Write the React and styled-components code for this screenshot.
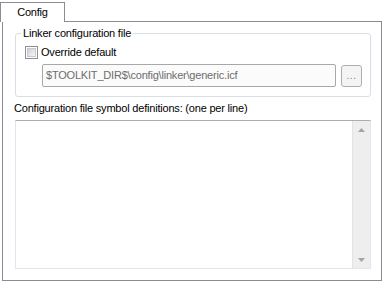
import React from "react";
import styled, { createGlobalStyle } from "styled-components";

const Global = createGlobalStyle`
  html, body { margin: 0; padding: 0; background: #ffffff; }
  body { font-family: "Liberation Sans", Arial, sans-serif; font-size: 11px; letter-spacing: -0.2px; color: #000; }
`;

const Window = styled.div`
  width: 383px;
  height: 282px;
  padding-top: 2px;
  box-sizing: border-box;
  display: flex;
  flex-direction: column;
`;

const TabStrip = styled.div`
  display: flex;
  height: 19px;
`;

const Tab = styled.div`
  width: 65px;
  height: 20px;
  box-sizing: border-box;
  border: 1px solid #898c95;
  border-bottom: none;
  background: #fff;
  position: relative;
  z-index: 1;
  display: flex;
  align-items: center;
  justify-content: center;
  padding-bottom: 1px;
  font-size: 11px;
  line-height: 13px;
`;

const Panel = styled.div`
  margin-left: 2px;
  width: 380px;
  height: 260px;
  box-sizing: border-box;
  border: 1px solid #898c95;
  background: #fff;
  padding: 5px 10px 0 11px;
  display: flex;
  flex-direction: column;
`;

const Group = styled.fieldset`
  margin: 0 0 0 1px;
  padding: 6px 8px 9px 9px;
  border: 1px solid #d5dfe5;
  border-radius: 3px;
  min-inline-size: 0;
`;

const Legend = styled.legend`
  padding: 0 2px;
  margin-left: -4px;
  line-height: 13px;
  font-size: 11px;
`;

const CheckRow = styled.label`
  display: flex;
  align-items: center;
  height: 13px;
  gap: 3px;
  margin-bottom: 5px;
  line-height: 13px;
`;

const CheckBox = styled.span`
  width: 13px;
  height: 13px;
  box-sizing: border-box;
  border: 1px solid #8e8f8f;
  background: #fff;
  padding: 1px;
  display: flex;
  & > span {
    flex: 1;
    border: 1px solid #c7c9cc;
    background: linear-gradient(135deg, #cbcfd5 0%, #e6e8eb 60%, #f6f6f6 100%);
  }
`;

const PathRow = styled.div`
  display: flex;
  align-items: center;
  gap: 5px;
  margin-left: 17px;
`;

const PathInput = styled.div`
  flex: 1;
  height: 23px;
  box-sizing: border-box;
  border: 1px solid #a8a8a8;
  border-radius: 2px;
  background: #fbfbfb;
  color: #6d6d6d;
  display: flex;
  align-items: center;
  padding-left: 3px;
  line-height: 13px;
  white-space: nowrap;
`;

const BrowseButton = styled.div`
  width: 21px;
  height: 22px;
  margin-top: 1px;
  box-sizing: border-box;
  border: 1px solid #adadad;
  border-radius: 3px;
  background: #f4f4f4;
  color: #838383;
  display: flex;
  align-items: center;
  justify-content: center;
  font-size: 10px;
  letter-spacing: 0.5px;
  padding-bottom: 1px;
`;

const FieldLabel = styled.div`
  margin-top: 5px;
  line-height: 13px;
  height: 13px;
`;

const TextBox = styled.div`
  margin: 5px 0 0 1px;
  height: 149px;
  box-sizing: border-box;
  border: 1px solid #e2e6eb;
  border-top-color: #abadb3;
  background: #fff;
  display: flex;
`;

const TextArea = styled.div`
  flex: 1;
`;

const ScrollBar = styled.div`
  width: 17px;
  background: #eeeeee;
  border-left: 1px solid #e3e3e3;
  display: flex;
  flex-direction: column;
  justify-content: space-between;
  align-items: center;
`;

const Arrow = styled.div`
  height: 17px;
  display: flex;
  align-items: center;
  justify-content: center;
  width: 100%;
`;

function Triangle({ down }) {
  return (
    <svg width="7" height="4" viewBox="0 0 7 4">
      {down ? (
        <polygon points="0,0 7,0 3.5,4" fill="#a3a3a3" />
      ) : (
        <polygon points="0,4 7,4 3.5,0" fill="#a3a3a3" />
      )}
    </svg>
  );
}

export default function App() {
  return (
    <>
      <Global />
      <Window>
        <TabStrip>
          <Tab>Config</Tab>
        </TabStrip>
        <Panel>
          <Group>
            <Legend>Linker configuration file</Legend>
            <CheckRow>
              <CheckBox>
                <span />
              </CheckBox>
              Override default
            </CheckRow>
            <PathRow>
              <PathInput>$TOOLKIT_DIR$\config\linker\generic.icf</PathInput>
              <BrowseButton>...</BrowseButton>
            </PathRow>
          </Group>
          <FieldLabel>Configuration file symbol definitions: (one per line)</FieldLabel>
          <TextBox>
            <TextArea />
            <ScrollBar>
              <Arrow>
                <Triangle />
              </Arrow>
              <Arrow>
                <Triangle down />
              </Arrow>
            </ScrollBar>
          </TextBox>
        </Panel>
      </Window>
    </>
  );
}
